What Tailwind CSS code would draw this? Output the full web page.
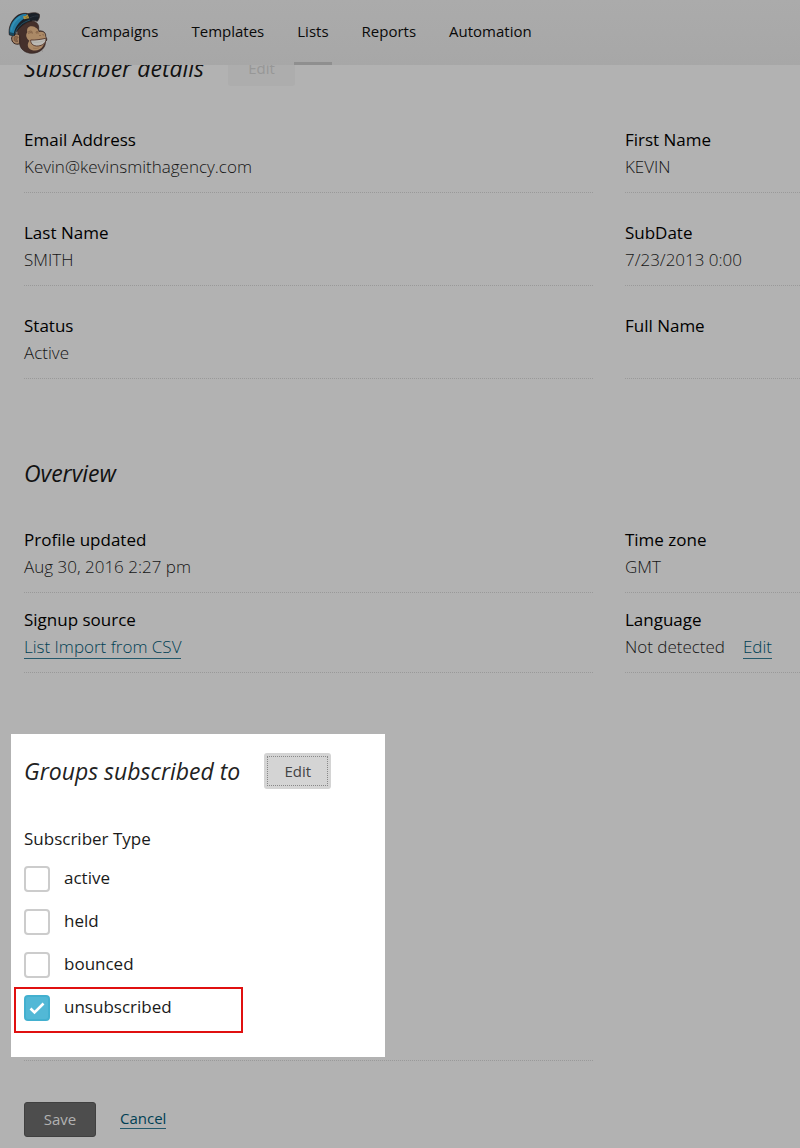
<!DOCTYPE html>
<html lang="en">
<head>
  <meta charset="UTF-8" />
  <meta name="viewport" content="width=device-width, initial-scale=1.0" />
  <title>Subscriber details</title>
  <script src="https://cdn.jsdelivr.net/npm/@tailwindcss/browser@4"></script>
</head>
<body class="min-h-screen overflow-x-hidden bg-[#b2b2b2] font-['Open_Sans','Noto_Sans',sans-serif] text-[17px] leading-[27px] text-[#151515]">

  <!-- Navbar -->
  <header class="relative z-10 flex h-[65px] items-center bg-linear-to-b from-[#ababab] to-[#a7a7a7] pl-2">
    <a href="#" aria-label="Home">
      <svg class="h-11 w-10" viewBox="24 34 120 132">
        <!-- head -->
        <path d="M52 92C50 78 62 66 84 64C104 63 115 69 116 82L116 94C124 92 134 96 136 102C138 106 136 110 139 114C142 119 140 124 136 126C138 142 122 160 97 161C75 161 61 148 59 133Z" fill="#45302b" stroke="#30211e" stroke-width="2" />
        <!-- ear -->
        <path d="M59 108C52 98 37 103 35 115C34 129 47 137 59 132Z" fill="#a58263" stroke="#33231f" stroke-width="3" />
        <path d="M55 113C49 107 42 111 42 117C42 124 48 128 54 125C49 122 50 117 55 113Z" fill="#8a6548" stroke="#44302a" stroke-width="1" />
        <!-- face -->
        <path d="M82 98C79 87 85 79 96 80C102 80 105 83 109 85C115 88 114 94 117 97C127 94 134 98 135 104C134 109 140 115 138 121C135 126 134 132 129 139C122 150 109 156 95 151C81 146 81 132 88 123C78 116 76 106 82 98Z" fill="#ab8966" />
        <path d="M92 121C104 122 124 119 137 116C140 126 132 135 120 138C105 142 91 135 92 121Z" fill="#bcbab5" stroke="#4a2d24" stroke-width="2.5" />
        <path d="M94 126C107 130 125 128 137 121" fill="none" stroke="#94948f" stroke-width="1" />
        <path d="M84 98C89 93 94 93 98 98M85 102C90 98 94 98 98 101M107 98C110 95 113 95 115 98M108 101C110 99 113 99 115 101" fill="none" stroke="#6b4a35" stroke-width="2" />
        <path d="M119 106L121 109M129 104L130 107" stroke="#503328" stroke-width="2" />
        <path d="M99 145C107 148 114 146 118 143" fill="none" stroke="#8b6649" stroke-width="1.5" />
        <circle cx="128" cy="154" r="1" fill="#45302b" />
        <!-- cap -->
        <path d="M28 106C24 85 34 60 53 47C65 40 77 40 84 42C98 38 112 38 118 44C120 51 117 58 112 65C97 60 78 69 66 79C53 90 46 100 43 109Z" fill="#192028" stroke="#30211e" stroke-width="2" />
        <path d="M29 99C27 81 39 59 56 49C64 44 72 43 79 43L84 51C63 59 47 75 41 103Z" fill="#257da4" />
        <path d="M34 92C36 75 46 60 61 51" fill="none" stroke="#338fb4" stroke-width="5" />
        <path d="M28 97L42 101L42 109L29 105Z" fill="#18475d" />
        <path d="M45 102C51 82 67 68 90 61" fill="none" stroke="#2b6880" stroke-width="2" />
        <path d="M89 55C99 49 109 48 116 49" fill="none" stroke="#2c343d" stroke-width="3" />
        <path d="M69 50L77 49L83 44L86 51L88 56L79 57L72 59Z" fill="#af9340" />
        <path d="M75 51L79 55L83 49" fill="none" stroke="#705b25" stroke-width="1.5" />
      </svg>
    </a>
    <nav class="ml-[30px] flex h-full gap-[27px] text-[15px] font-medium text-[#0a0a0a]">
      <a href="#" class="flex items-center border-b-3 border-transparent px-[3px]">Campaigns</a>
      <a href="#" class="flex items-center border-b-3 border-transparent px-[3px]">Templates</a>
      <a href="#" class="flex items-center border-b-3 border-[#8f8f8f] px-[3px]">Lists</a>
      <a href="#" class="flex items-center border-b-3 border-transparent px-[3px]">Reports</a>
      <a href="#" class="flex items-center border-b-3 border-transparent px-[3px]">Automation</a>
    </nav>
  </header>

  <main class="-mt-[15px] pb-[11px] pl-6">

    <!-- Subscriber details, scrolled partly under the navbar -->
    <section>
      <div class="flex h-9 items-center gap-6">
        <h2 class="text-[23px] font-medium italic text-[#111]">Subscriber details</h2>
        <button disabled class="h-9 w-[67px] rounded-[3px] bg-[#adadad] text-[15px] font-medium text-[#979797]">Edit</button>
      </div>
      <dl class="mt-10 grid grid-cols-[minmax(0,13fr)_minmax(0,4fr)] gap-x-8 gap-y-[26px]">
        <div class="border-b border-dotted border-[#999] pb-3">
          <dt class="font-medium text-black">Email Address</dt>
          <dd class="font-light">Kevin@kevinsmithagency.com</dd>
        </div>
        <div class="border-b border-dotted border-[#999] pb-3">
          <dt class="font-medium text-black">First Name</dt>
          <dd class="font-light">KEVIN</dd>
        </div>
        <div class="border-b border-dotted border-[#999] pb-3">
          <dt class="font-medium text-black">Last Name</dt>
          <dd class="font-light">SMITH</dd>
        </div>
        <div class="border-b border-dotted border-[#999] pb-3">
          <dt class="font-medium text-black">SubDate</dt>
          <dd class="font-light">7/23/2013 0:00</dd>
        </div>
        <div class="border-b border-dotted border-[#999] pb-3">
          <dt class="font-medium text-black">Status</dt>
          <dd class="font-light">Active</dd>
        </div>
        <div class="border-b border-dotted border-[#999] pb-3">
          <dt class="font-medium text-black">Full Name</dt>
          <dd class="font-light"></dd>
        </div>
      </dl>
    </section>

    <!-- Overview -->
    <section class="mt-[76px]">
      <div class="flex h-9 items-center">
        <h2 class="text-[23px] font-medium italic text-[#111]">Overview</h2>
      </div>
      <dl class="mt-[35px] grid grid-cols-[minmax(0,13fr)_minmax(0,4fr)] gap-x-8 gap-y-[13px]">
        <div class="border-b border-dotted border-[#999] pb-3">
          <dt class="font-medium text-black">Profile updated</dt>
          <dd class="font-light">Aug 30, 2016 2:27 pm</dd>
        </div>
        <div class="border-b border-dotted border-[#999] pb-3">
          <dt class="font-medium text-black">Time zone</dt>
          <dd class="font-light">GMT</dd>
        </div>
        <div class="border-b border-dotted border-[#999] pb-3">
          <dt class="font-medium text-black">Signup source</dt>
          <dd class="font-light"><a href="#" class="border-b border-[#24596b] text-[#003f54]">List Import from CSV</a></dd>
        </div>
        <div class="border-b border-dotted border-[#999] pb-3">
          <dt class="font-medium text-black">Language</dt>
          <dd class="flex gap-[18px] font-light">Not detected <span><a href="#" class="border-b border-[#24596b] text-[#003f54]">Edit</a></span></dd>
        </div>
      </dl>
    </section>

    <!-- Groups -->
    <form class="mt-[61px]">
      <div class="grid grid-cols-[minmax(0,13fr)_minmax(0,4fr)] gap-x-8">
        <div class="border-b border-dotted border-[#999] pb-[3px]">
          <div class="-ml-[13px] w-[374px] bg-white px-[13px] pt-[19px] pb-7">
            <div class="flex h-9 items-center gap-6">
              <h2 class="text-[23px] font-medium italic text-[#222]">Groups subscribed to</h2>
              <button type="button" class="h-9 w-[67px] rounded-[3px] bg-[#d4d4d4] p-[3px] text-[15px] font-medium text-[#444]">
                <span class="flex h-full items-center justify-center border border-dotted border-[#888]">Edit</span>
              </button>
            </div>
            <fieldset class="mt-9">
              <legend class="mb-[5px] font-medium text-[#1a1a1a]">Subscriber Type</legend>
              <div class="flex h-[43px] items-center gap-[14px]">
                <input id="active" type="checkbox" class="size-[26px] appearance-none rounded border-2 border-[#ccc] bg-white checked:border-[#43b0cf] checked:bg-[#52b8d6]" />
                <label for="active" class="pb-[3px] font-medium text-[#1a1a1a]">active</label>
              </div>
              <div class="flex h-[43px] items-center gap-[14px]">
                <input id="held" type="checkbox" class="size-[26px] appearance-none rounded border-2 border-[#ccc] bg-white checked:border-[#43b0cf] checked:bg-[#52b8d6]" />
                <label for="held" class="pb-[3px] font-medium text-[#1a1a1a]">held</label>
              </div>
              <div class="flex h-[43px] items-center gap-[14px]">
                <input id="bounced" type="checkbox" class="size-[26px] appearance-none rounded border-2 border-[#ccc] bg-white checked:border-[#43b0cf] checked:bg-[#52b8d6]" />
                <label for="bounced" class="pb-[3px] font-medium text-[#1a1a1a]">bounced</label>
              </div>
              <div class="relative flex h-[43px] items-center gap-[14px]">
                <input id="unsubscribed" type="checkbox" checked class="size-[26px] appearance-none rounded border-2 border-[#ccc] bg-white checked:border-[#43b0cf] checked:bg-[#52b8d6]" />
                <svg class="pointer-events-none absolute left-0 size-[26px]" viewBox="0 0 26 26" fill="none" stroke="#fff" stroke-width="2.6">
                  <path d="M6.5 13.5L10.5 17.5L19.5 8.5" />
                </svg>
                <label for="unsubscribed" class="pb-[3px] font-medium text-[#1a1a1a]">unsubscribed</label>
                <!-- highlight -->
                <div class="pointer-events-none absolute -bottom-1 -left-[10px] h-[46px] w-[229px] border-2 border-[#e01010]"></div>
              </div>
            </fieldset>
          </div>
        </div>
      </div>

      <div class="mt-[41px] flex items-center gap-6">
        <button type="submit" class="h-[35px] w-[72px] rounded-[3px] border border-[#404040] bg-[#4d4d4d] text-[15px] font-medium text-[#b2b2b2]">Save</button>
        <span class="pb-1"><a href="#" class="border-b border-[#24596b] text-[15px] font-medium text-[#003f54]">Cancel</a></span>
      </div>
    </form>
  </main>
</body>
</html>
